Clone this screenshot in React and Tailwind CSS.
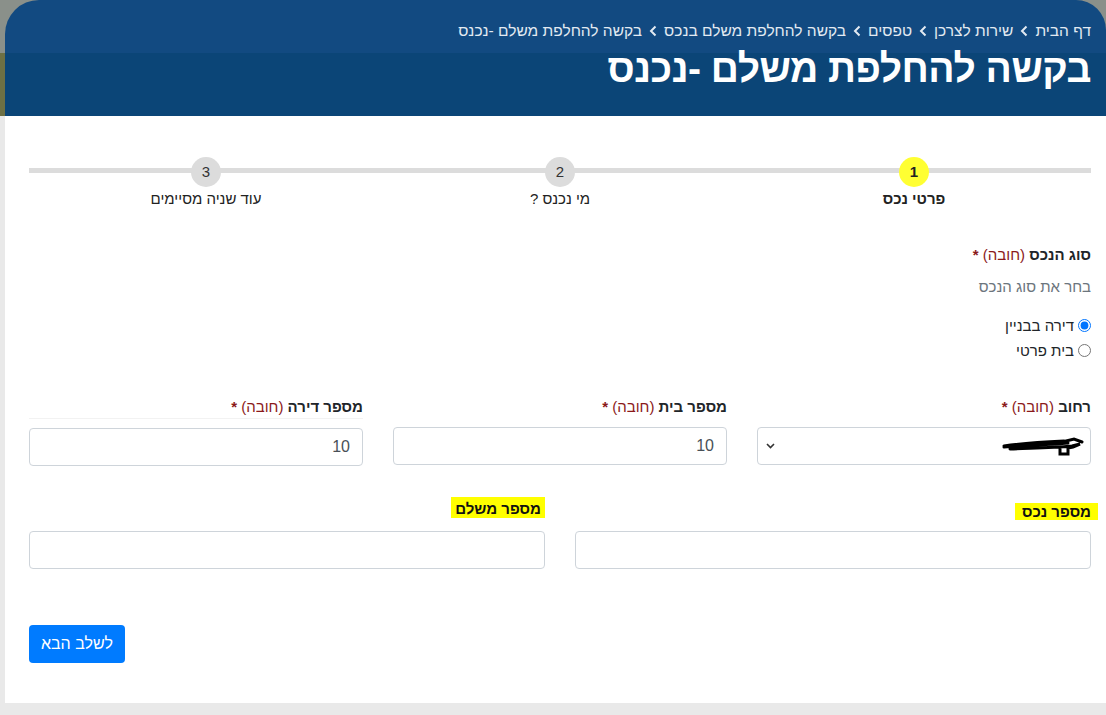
const font = { fontFamily: '"Liberation Sans", Arial, sans-serif' }

function Chev() {
  return (
    <svg width="8" height="12" viewBox="0 0 8 12" className="mx-[7px] shrink-0">
      <path d="M6.5 1.5 L2 6 L6.5 10.5" stroke="currentColor" strokeWidth="2" fill="none" />
    </svg>
  )
}

function Crumb({ children, last }) {
  return (
    <>
      <span>{children}</span>
      {!last && <Chev />}
    </>
  )
}

function Step({ num, label, active }) {
  return (
    <div className="flex flex-col items-center">
      <div
        className={
          'relative z-10 flex h-[30px] w-[30px] items-center justify-center rounded-full text-[15px] ' +
          (active ? 'bg-[#ffff33] font-bold text-[#222]' : 'bg-[#dcdcdc] text-[#333]')
        }
      >
        {num}
      </div>
      <div className={'mt-[3px] text-[15px] leading-[17px] text-[#222] ' + (active ? 'font-bold' : '')}>{label}</div>
    </div>
  )
}

function Req({ children }) {
  return (
    <div className="text-[15px] leading-[20px] text-[#212529]">
      <span className="font-bold">{children}</span> <span className="text-[#8b1a1a]">(חובה)</span>{' '}
      <span className="font-bold text-[#8b1a1a]">*</span>
    </div>
  )
}

function TextInput({ value }) {
  return (
    <div className="flex h-[38px] items-center rounded-[4px] border border-[#ced4da] bg-white px-[12px] text-[16px] text-[#495057]">
      {value}
    </div>
  )
}

export default function App() {
  return (
    <div dir="rtl" style={font} className="min-h-[715px] w-[1106px] overflow-hidden bg-[#e9e9e9]">
      <div className="bg-[linear-gradient(to_bottom,#8a908a_0px,#8a908a_53px,#6d7044_53px,#6d7044_116px)]">
        <div className="ml-[5px] h-[116px] overflow-hidden rounded-tl-[34px] rounded-tr-[30px] bg-[linear-gradient(to_bottom,#124a81_0px,#124a81_53px,#0b4577_53px,#0b4577_116px)] pr-[15px] pt-[20px] text-white">
          <div className="flex items-center text-[15.5px] leading-[22px] text-[#e3eaf2]">
            <Crumb>דף הבית</Crumb>
            <Crumb>שירות לצרכן</Crumb>
            <Crumb>טפסים</Crumb>
            <Crumb>בקשה להחלפת משלם בנכס</Crumb>
            <Crumb last>בקשה להחלפת משלם -נכנס</Crumb>
          </div>
          <h1 className="mt-[5px] text-[39px] font-bold leading-[44px] tracking-[-0.5px]">בקשה להחלפת משלם -נכנס</h1>
        </div>
      </div>

      <div className="ml-[5px] h-[587px] bg-white pl-[24px] pr-[15px] pt-[41px]">
        <div className="relative">
          <div className="absolute left-0 right-0 top-[11px] h-[5px] bg-[#dcdcdc]" />
          <div className="grid grid-cols-3">
            <Step num="1" label="פרטי נכס" active />
            <Step num="2" label="מי נכנס ?" />
            <Step num="3" label="עוד שניה מסיימים" />
          </div>
        </div>

        <div className="mt-[38px]">
          <Req>סוג הנכס</Req>
          <div className="mt-[12px] text-[15px] leading-[20px] text-[#6c757d]">בחר את סוג הנכס</div>
          <div className="mt-[16px] flex flex-col text-[15px] leading-[25px] text-[#212529]">
            <label className="flex items-center gap-[4px]">
              <input type="radio" name="t" defaultChecked className="m-0 h-[13px] w-[13px] accent-[#0075ff]" />
              דירה בבניין
            </label>
            <label className="flex items-center gap-[4px]">
              <input type="radio" name="t" className="m-0 h-[13px] w-[13px]" />
              בית פרטי
            </label>
          </div>
        </div>

        <div className="mt-[34px] grid grid-cols-3 gap-[30px]">
          <div>
            <Req>רחוב</Req>
            <div className="mt-[10px] flex h-[38px] items-center justify-between rounded-[4px] border border-[#ced4da] bg-white pl-[8px] pr-[6px]">
              <svg width="84" height="24" viewBox="0 0 84 24">
                <path
                  d="M4 12 C24 9 44 8 64 7 M4 13 C26 11 48 11 68 9 M10 15 C32 14 50 14 72 12 L80 10 L73 13 L68 14 L68 20 L60 20 L60 15 M62 8 L74 5 L82 8"
                  stroke="#000"
                  strokeWidth="3"
                  fill="none"
                  strokeLinecap="round"
                />
              </svg>
              <svg width="9" height="6" viewBox="0 0 9 6">
                <path d="M1 1 L4.5 4.5 L8 1" stroke="#333" strokeWidth="1.6" fill="none" />
              </svg>
            </div>
          </div>
          <div>
            <Req>מספר בית</Req>
            <div className="mt-[10px]">
              <TextInput value="10" />
            </div>
          </div>
          <div>
            <div className="border-b border-[#f2f2f2] pb-[1px]">
              <Req>מספר דירה</Req>
            </div>
            <div className="mt-[9px]">
              <TextInput value="10" />
            </div>
          </div>
        </div>

        <div className="mt-[34px] grid grid-cols-2 gap-[30px]">
          <div>
            <div className="flex h-[20px] items-end">
              <span className="mr-[-7px] bg-[#ffff00] px-[7px] text-[15px] font-bold leading-[17px] text-[#111]">מספר נכס</span>
            </div>
            <div className="mt-[11px]">
              <TextInput value="" />
            </div>
          </div>
          <div>
            <div className="flex h-[20px] items-end">
              <span className="mb-[2px] bg-[#ffff00] px-[4px] pb-[1px] pt-[3px] text-[15px] font-bold leading-[17px] text-[#111]">מספר משלם</span>
            </div>
            <div className="mt-[11px]">
              <TextInput value="" />
            </div>
          </div>
        </div>

        <div className="mt-[56px] flex justify-end">
          <button className="h-[38px] rounded-[4px] bg-[#007bff] px-[12px] text-[16px] text-white">לשלב הבא</button>
        </div>
      </div>
    </div>
  )
}
